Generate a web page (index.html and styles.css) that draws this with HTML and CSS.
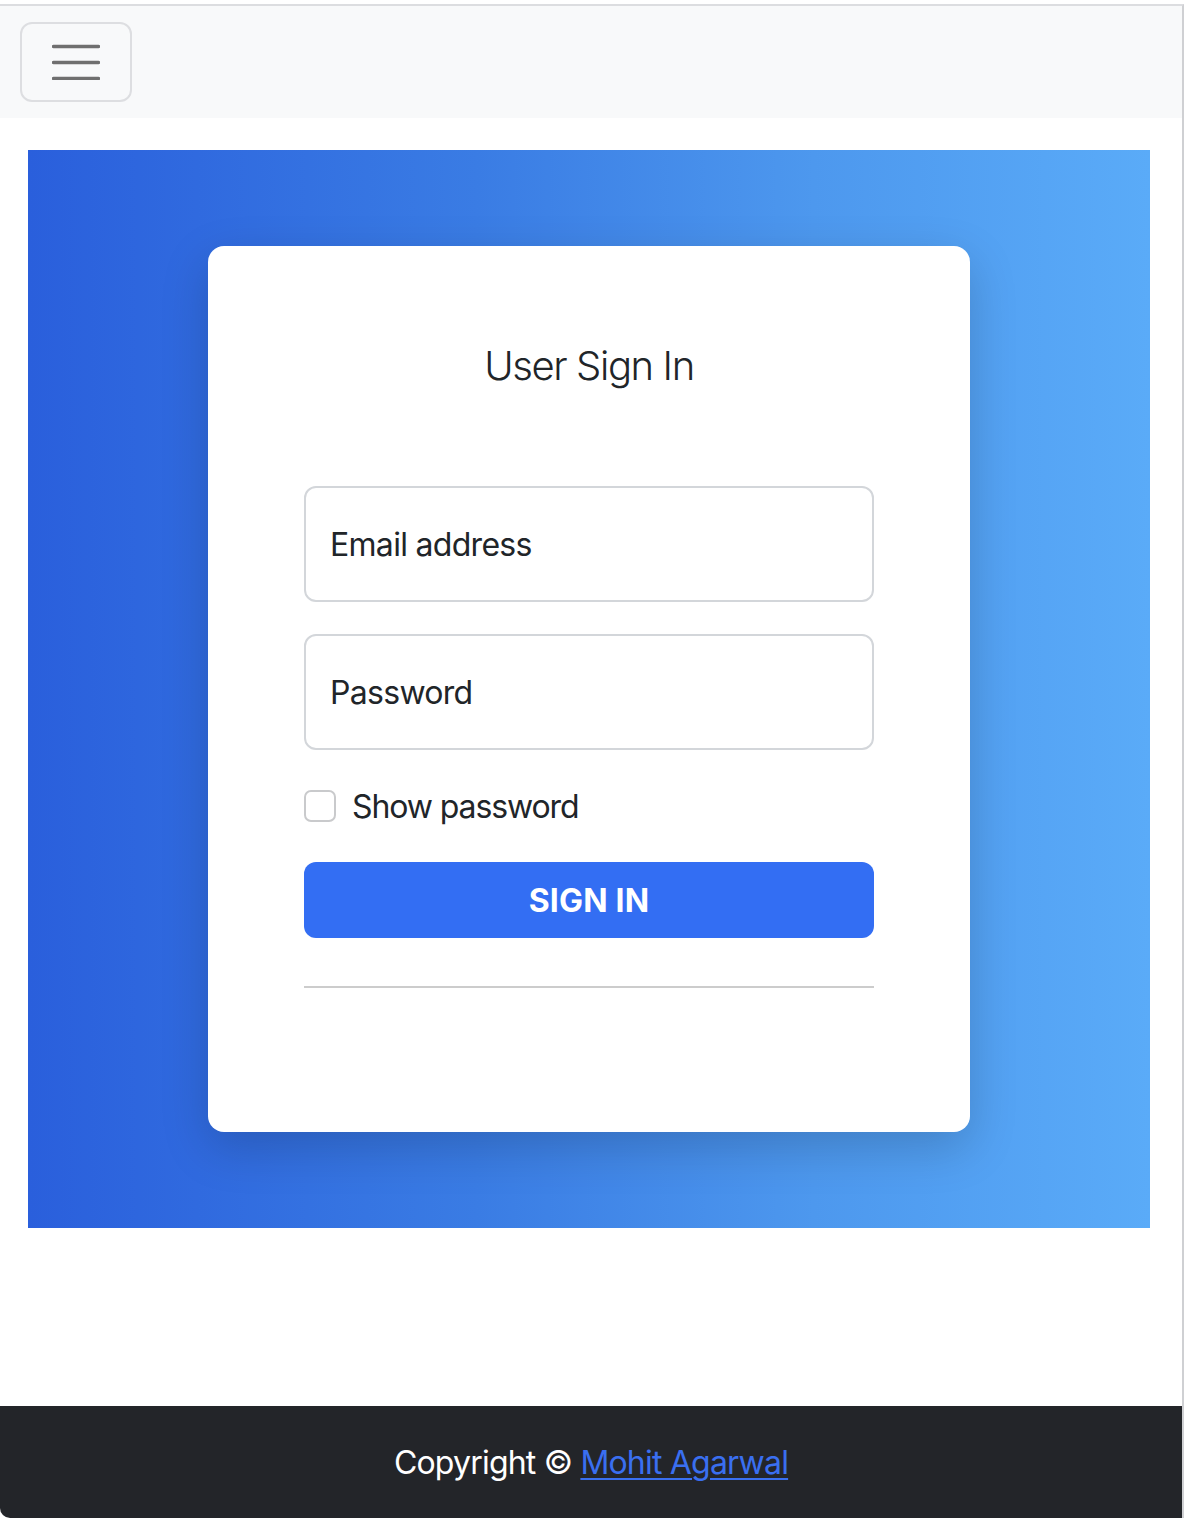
FILE: index.html
```html
<!DOCTYPE html>
<html lang="en">
<head>
<meta charset="utf-8">
<title>User Sign In</title>
<link rel="stylesheet" href="styles.css">
</head>
<body>
<div class="window">
  <nav class="navbar">
    <button class="toggler" type="button" aria-label="Toggle navigation">
      <svg width="48" height="36" viewBox="0 0 48 36" aria-hidden="true">
        <path d="M1.5 2.5H46.5M1.5 18.5H46.5M1.5 34.5H46.5" stroke="#6f6f6f" stroke-width="3.5" stroke-linecap="round" fill="none"/>
      </svg>
    </button>
  </nav>
  <main class="hero">
    <div class="card">
      <h1 class="title">User Sign In</h1>
      <form class="form">
        <input class="field" type="email" placeholder="Email address">
        <input class="field" type="password" placeholder="Password">
        <label class="check">
          <input class="check-box" type="checkbox">
          <span>Show password</span>
        </label>
        <button class="btn" type="button">SIGN IN</button>
        <hr class="divider">
      </form>
    </div>
  </main>
  <footer class="footer">
    <p>Copyright © <a href="#">Mohit Agarwal</a></p>
  </footer>
</div>
</body>
</html>
```

FILE: styles.css
```css
html, body {
  margin: 0;
  padding: 0;
  background: #ffffff;
}

body {
  font-family: Inter, "Noto Sans", "Liberation Sans", sans-serif;
  color: #212529;
}

.window {
  margin-top: 4px;
  width: 1184px;
  min-height: calc(100vh - 4px);
  box-sizing: border-box;
  border-top: 2px solid #dcdde0;
  border-right: 2px solid #cfd0d3;
  display: flex;
  flex-direction: column;
}

.navbar {
  background: #f8f9fa;
  height: 112px;
  box-sizing: border-box;
  padding: 16px 20px;
  display: flex;
  align-items: flex-start;
}

.toggler {
  width: 112px;
  height: 80px;
  box-sizing: border-box;
  border: 2px solid #dddee1;
  border-radius: 12px;
  background: transparent;
  display: flex;
  align-items: center;
  justify-content: center;
  padding: 0;
}

.hero {
  margin: 32px 32px 0 28px;
  padding: 96px 0;
  background: linear-gradient(to right, #2a5fdc 0%, #3a7ce4 40%, #4d98ee 70%, #5aabf8 100%);
  display: flex;
  justify-content: center;
}

.card {
  width: 762px;
  box-sizing: border-box;
  background: #ffffff;
  border-radius: 16px;
  padding: 96px 96px 96px;
  box-shadow: 0 16px 48px rgba(0, 0, 0, 0.175);
}

.title {
  margin: 0 0 96px;
  font-size: 40px;
  line-height: 48px;
  font-weight: 300;
  letter-spacing: -1.4px;
  text-align: center;
  color: #212529;
}

.form {
  display: flex;
  flex-direction: column;
}

.field {
  height: 116px;
  box-sizing: border-box;
  border: 2px solid #d3d6da;
  border-radius: 12px;
  padding: 0 24px;
  margin: 0 0 32px;
  font-family: inherit;
  font-size: 32px;
  letter-spacing: -0.7px;
  color: #212529;
  background: #ffffff;
  outline: none;
}

.field::placeholder {
  color: #212529;
  opacity: 1;
}

.check {
  display: flex;
  align-items: center;
  gap: 16px;
  height: 48px;
  margin: 0 0 32px;
  font-size: 32px;
  line-height: 48px;
  letter-spacing: -1.1px;
  color: #212529;
}

.check span {
  position: relative;
  top: 1px;
}

.check-box {
  appearance: none;
  -webkit-appearance: none;
  width: 32px;
  height: 32px;
  margin: 0;
  box-sizing: border-box;
  border: 2px solid #c9cacc;
  border-radius: 7px;
  background: #ffffff;
  flex: none;
}

.btn {
  height: 76px;
  border: none;
  border-radius: 12px;
  background: #336ef3;
  color: #ffffff;
  font-family: inherit;
  font-size: 32px;
  font-weight: 700;
  letter-spacing: 0.2px;
  padding: 0;
}

.divider {
  margin: 48px 0;
  border: none;
  border-top: 2px solid #cccccc;
  height: 0;
}

.footer {
  margin-top: auto;
  height: 112px;
  background: #232529;
  border-bottom-left-radius: 10px;
  display: flex;
  align-items: center;
  justify-content: center;
}

.footer p {
  margin: 0;
  font-size: 32px;
  letter-spacing: -0.8px;
  color: #ffffff;
}

.footer a {
  color: #3a6ff0;
  text-decoration: underline;
  text-decoration-thickness: 2px;
  text-underline-offset: 4px;
}
```
